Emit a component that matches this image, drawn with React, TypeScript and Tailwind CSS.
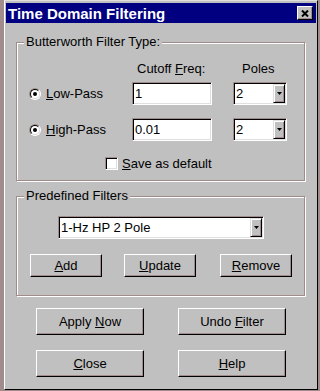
import type { ReactNode } from 'react'

function Btn({ children, className = '' }: { children: ReactNode; className?: string }) {
  return (
    <div
      className={
        'flex items-center justify-center border border-t-white border-l-white border-r-black border-b-black bg-[#c0c0c0] text-[13px] text-black shadow-[inset_-1px_-1px_0_#a08c8c] ' +
        className
      }
    >
      {children}
    </div>
  )
}

function Radio() {
  return (
    <div className="h-[12px] w-[12px] shrink-0 rounded-full border border-t-[#a08c8c] border-l-[#a08c8c] border-r-white border-b-white">
      <div className="flex h-full w-full items-center justify-center rounded-full border border-t-black border-l-black border-r-[#dfdfdf] border-b-[#dfdfdf] bg-white">
        <div className="h-[4px] w-[4px] rounded-full bg-black" />
      </div>
    </div>
  )
}

function DropArrow() {
  return (
    <div className="flex w-[12px] items-center justify-center border border-t-[#dfdfdf] border-l-[#dfdfdf] border-r-black border-b-black bg-[#c0c0c0] shadow-[inset_1px_1px_0_#fff,inset_-1px_-1px_0_#a08c8c]">
      <svg width="5" height="3" viewBox="0 0 5 3">
        <polygon points="0,0 5,0 2.5,3" fill="#000" />
      </svg>
    </div>
  )
}

function Field({ value, className = '' }: { value: string; className?: string }) {
  return (
    <div
      className={
        'flex items-center border border-t-[#a08c8c] border-l-[#a08c8c] border-r-white border-b-white bg-white pl-[2px] text-[13px] shadow-[inset_1px_1px_0_#000,inset_-1px_-1px_0_#dfdfdf] ' +
        className
      }
    >
      {value}
    </div>
  )
}

function Combo({ value, className = '' }: { value: string; className?: string }) {
  return (
    <div
      className={
        'flex items-stretch border border-t-[#a08c8c] border-l-[#a08c8c] border-r-white border-b-white bg-white p-[1px] text-[13px] shadow-[inset_1px_1px_0_#000,inset_-1px_-1px_0_#dfdfdf] ' +
        className
      }
    >
      <div className="flex flex-1 items-center pl-[1px]">{value}</div>
      <DropArrow />
    </div>
  )
}

export default function App() {
  return (
    <div
      className="h-[391px] w-[320px] overflow-hidden border-l-4 border-r-2 border-b border-[#a08c8c] bg-[#c0c0c0] text-[13px] leading-[15px] text-black"
      style={{ fontFamily: '"Liberation Sans", Arial, sans-serif' }}
    >
      <div className="h-[390px] border border-t-[#dfdfdf] border-l-white border-r-black border-b-black px-[1px] pt-[2px]">
        {/* title bar */}
        <div className="flex h-[20px] items-center justify-between bg-[#000080] pl-[2px] pr-[3px]">
          <span className="text-[15px] font-bold leading-none text-white">Time Domain Filtering</span>
          <div className="flex h-[14px] w-[16px] items-center justify-center border border-t-white border-l-white border-r-black border-b-black bg-[#c0c0c0] shadow-[inset_-1px_-1px_0_#a08c8c]">
            <svg width="8" height="7" viewBox="0 0 8 7">
              <path d="M1 0.5 L7 6.5 M7 0.5 L1 6.5" stroke="#000" strokeWidth="2" />
            </svg>
          </div>
        </div>

        {/* Butterworth group */}
        <div className="relative ml-[10px] mt-[19px] h-[139px] w-[289px] border border-[#a08c8c] shadow-[inset_1px_1px_0_#fff,1px_1px_0_#fff]">
          <span className="absolute left-[7px] top-[-9px] bg-[#c0c0c0] px-[2px]">Butterworth Filter Type:</span>

          <div className="grid grid-cols-[115px_101px_55px] pt-[18px]">
            <div />
            <div className="pl-[5px]">
              Cutoff <u>F</u>req:
            </div>
            <div className="pl-[9px]">Poles</div>
          </div>

          <div className="mt-[6px] grid h-[23px] grid-cols-[115px_101px_55px]">
            <div className="flex items-center gap-[5px] pl-[12px]">
              <Radio />
              <span>
                <u>L</u>ow-Pass
              </span>
            </div>
            <Field value="1" className="w-[80px]" />
            <Combo value="2" className="w-[54px]" />
          </div>

          <div className="mt-[13px] grid h-[23px] grid-cols-[115px_101px_55px]">
            <div className="flex items-center gap-[5px] pl-[12px]">
              <Radio />
              <span>
                <u>H</u>igh-Pass
              </span>
            </div>
            <Field value="0.01" className="w-[80px]" />
            <Combo value="2" className="w-[54px]" />
          </div>

          <div className="ml-[88px] mt-[15px] flex items-center gap-[4px]">
            <div className="h-[13px] w-[13px] border border-t-[#a08c8c] border-l-[#a08c8c] border-r-white border-b-white bg-white shadow-[inset_1px_1px_0_#000,inset_-1px_-1px_0_#dfdfdf]" />
            <span>
              <u>S</u>ave as default
            </span>
          </div>
        </div>

        {/* Predefined group */}
        <div className="relative ml-[10px] mt-[15px] h-[100px] w-[289px] border border-[#a08c8c] shadow-[inset_1px_1px_0_#fff,1px_1px_0_#fff]">
          <span className="absolute left-[7px] top-[-9px] bg-[#c0c0c0] px-[2px]">Predefined Filters</span>
          <Combo value="1-Hz HP 2 Pole" className="ml-[41px] mt-[19px] h-[23px] w-[206px]" />
          <div className="mt-[15px] flex pl-[13px]">
            <Btn className="h-[23px] w-[72px]">
              <u>A</u>dd
            </Btn>
            <Btn className="ml-[22px] h-[23px] w-[72px]">
              <u>U</u>pdate
            </Btn>
            <Btn className="ml-[24px] h-[23px] w-[72px]">
              <u>R</u>emove
            </Btn>
          </div>
        </div>

        {/* bottom buttons */}
        <div className="mt-[12px] flex pl-[30px]">
          <Btn className="h-[27px] w-[108px]">
            Apply&nbsp;<u>N</u>ow
          </Btn>
          <Btn className="ml-[34px] h-[27px] w-[108px]">
            Undo&nbsp;<u>F</u>ilter
          </Btn>
        </div>
        <div className="mt-[15px] flex pl-[30px]">
          <Btn className="h-[27px] w-[108px]">
            <u>C</u>lose
          </Btn>
          <Btn className="ml-[34px] h-[27px] w-[108px]">
            <u>H</u>elp
          </Btn>
        </div>
      </div>
    </div>
  )
}
